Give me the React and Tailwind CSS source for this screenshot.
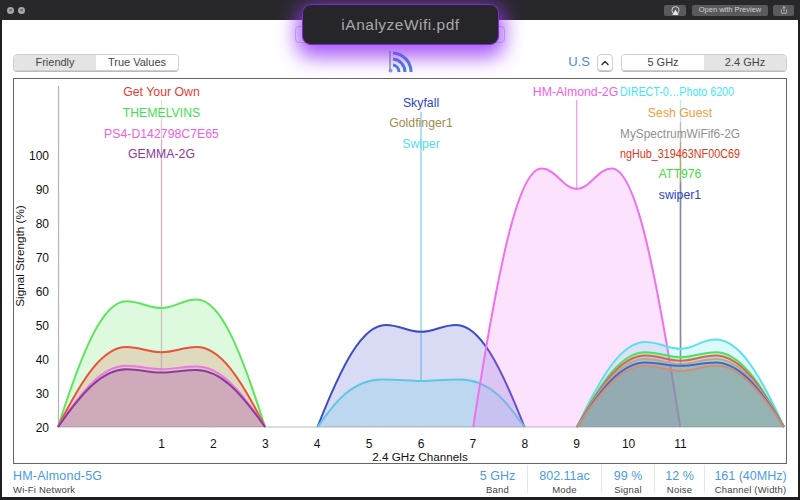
import { ChevronUp, Share } from 'lucide-react';

const BASE = 427;
const yOf = (v) => BASE - (v - 20) * 3.4;
const xOf = (c) => 161.5 + (c - 1) * 51.9;

function curvePath(ch, left, mid, right, soft) {
  const cx = xOf(ch);
  const h = 103.5;
  const x0 = cx - h;
  const x1 = cx + h;
  const pl = yOf(left);
  const pm = yOf(mid);
  const pr = yOf(right);
  const k = soft ? 0.35 : 0.62;
  const a = soft ? 0.12 : 0.24;
  const b = soft ? 0.3 : 0.435;
  const c = soft ? 0.62 : 0.66;
  const rise = (p) => BASE - (BASE - p) * k;
  return [
    `M${x0} ${BASE}`,
    `C${x0 + a * h} ${rise(pl)} ${x0 + b * h} ${pl} ${cx - (1 - c) * h} ${pl}`,
    `C${cx - 0.2 * h} ${pl} ${cx - 0.13 * h} ${pm} ${cx} ${pm}`,
    `C${cx + 0.13 * h} ${pm} ${cx + 0.2 * h} ${pr} ${cx + (1 - c) * h} ${pr}`,
    `C${x1 - b * h} ${pr} ${x1 - a * h} ${rise(pr)} ${x1} ${BASE}`,
  ].join(' ');
}

const curvas = [
  { ch: 1, v: [57, 55, 57.5], cor: '#5ce65c', topo: 100, linha: 0.22 },
  { ch: 1, v: [43.5, 42, 43.5], cor: '#e8533c', topo: 100, linha: 0.1 },
  { ch: 1, v: [38, 37, 37.8], cor: '#e77be0', topo: 120, linha: 0.2 },
  { ch: 1, v: [37, 36, 36.8], cor: '#8e3a9c', topo: 140, linha: 0.2 },
  { ch: 6, v: [50, 48, 50], cor: '#3c4cc4', topo: 112, linha: 0.08 },
  { ch: 6, v: [34, 33.5, 34], cor: '#5cc8e4', topo: 112, soft: true, linha: 0.7 },
  { ch: 9, v: [96, 90, 96], cor: '#f070f0', topo: 100, linha: 0.7 },
  { ch: 11, v: [45, 43, 45.7], cor: '#5ce0f0', topo: 100, linha: 0.45 },
  { ch: 11, v: [42, 40.5, 42], cor: '#50e060', topo: 162, linha: 0.45 },
  { ch: 11, v: [41, 39.5, 41], cor: '#d8645a', topo: 142, linha: 0.45 },
  { ch: 11, v: [40, 38.5, 40], cor: '#b8a890', topo: 122, linha: 0.45, fundo: '#80a8a0' },
  { ch: 11, v: [39, 38, 39], cor: '#4068d0', topo: 182, linha: 0.6 },
  { ch: 11, v: [38, 36.5, 38], cor: '#d09070', topo: 122, linha: 0.3, fundo: '#709a88' },
];

const rotulos = [
  { t: 'Get Your Own', x: 161.5, y: 91, cor: '#e0402f' },
  { t: 'THEMELVINS', x: 161.5, y: 112, cor: '#3fe04f' },
  { t: 'PS4-D142798C7E65', x: 161.5, y: 133, cor: '#f060e8' },
  { t: 'GEMMA-2G', x: 161.5, y: 153, cor: '#8e3a9c' },
  { t: 'Skyfall', x: 421, y: 102, cor: '#2a45c8' },
  { t: 'Goldfinger1', x: 421, y: 122, cor: '#a58a50' },
  { t: 'Swiper', x: 421, y: 143, cor: '#50e0f0' },
  { t: 'HM-Almond-2G', x: 575.5, y: 91, cor: '#f060f0' },
  { t: 'DIRECT-0…Photo 6200', x: 677, y: 91, cor: '#40e8f8', w: 114 },
  { t: 'Sesh Guest', x: 680, y: 112, cor: '#f0a040' },
  { t: 'MySpectrumWiFif6-2G', x: 680, y: 133, cor: '#909090', w: 120 },
  { t: 'ngHub_319463NF00C69', x: 680, y: 153, cor: '#e03820', w: 120 },
  { t: 'ATT976', x: 680, y: 173, cor: '#40e040' },
  { t: 'swiper1', x: 680, y: 194, cor: '#2a45c8' },
];

function Grafico() {
  return (
    <svg viewBox="14 79 772 384" className="block h-full w-full font-['Liberation_Sans',sans-serif]">
      <line x1="58.5" y1="86" x2="58.5" y2={BASE} stroke="#b4b4b4" strokeWidth="1.2" />
      <line x1="58" y1={BASE} x2="784" y2={BASE} stroke="#bcbcbc" strokeWidth="1.2" />

      {curvas.map((c, i) => (
        <line
          key={`l${i}`}
          x1={xOf(c.ch)}
          x2={xOf(c.ch)}
          y1={c.topo}
          y2={yOf(c.v[1])}
          stroke={c.cor}
          strokeOpacity={c.linha}
          strokeWidth="1.3"
        />
      ))}

      {curvas.map((c, i) => (
        <path
          key={`c${i}`}
          d={curvePath(c.ch, c.v[0], c.v[1], c.v[2], c.soft)}
          fill={c.fundo || c.cor}
          fillOpacity="0.2"
          stroke={c.cor}
          strokeWidth="2"
        />
      ))}

      {[100, 90, 80, 70, 60, 50, 40, 30, 20].map((v) => (
        <text key={v} x="49" y={yOf(v) + 4.5} textAnchor="end" fontSize="12" fill="#111">
          {v}
        </text>
      ))}

      {[1, 2, 3, 4, 5, 6, 7, 8, 9, 10, 11].map((c) => (
        <text key={c} x={xOf(c)} y="448" textAnchor="middle" fontSize="12" fill="#111">
          {c}
        </text>
      ))}

      <text x="420" y="461" textAnchor="middle" fontSize="11.7" fill="#111">
        2.4 GHz Channels
      </text>
      <text
        transform="translate(24 256) rotate(-90)"
        textAnchor="middle"
        fontSize="11.7"
        fill="#111"
      >
        Signal Strength (%)
      </text>

      {rotulos.map((r) => (
        <text
          key={r.t}
          x={r.x}
          y={r.y + 4.5}
          textAnchor="middle"
          fontSize="12.3"
          fill={r.cor}
          {...(r.w ? { textLength: r.w, lengthAdjust: 'spacingAndGlyphs' } : {})}
        >
          {r.t}
        </text>
      ))}
    </svg>
  );
}

function IconeWifi() {
  return (
    <svg width="26" height="24" viewBox="0 0 26 24" fill="none">
      <line x1="3" y1="1" x2="3" y2="19" stroke="#6b8a5a" strokeWidth="1.2" />
      <circle cx="3.5" cy="20.5" r="2" fill="#7fa0d8" />
      <path d="M6 15a7 7 0 0 1 6 7" stroke="#3f80de" strokeWidth="3" />
      <path d="M6 9a13 13 0 0 1 12 13" stroke="#3f80de" strokeWidth="3" />
      <path d="M6 3a19 19 0 0 1 18 19" stroke="#3f80de" strokeWidth="3" />
    </svg>
  );
}

function IconeAirplay() {
  return (
    <svg width="9" height="9" viewBox="0 0 9 9" fill="none">
      <circle cx="4.5" cy="4.2" r="3.6" stroke="#e0e0e0" strokeWidth="0.9" />
      <path d="M4.5 3.6 7.6 9H1.4Z" fill="#e8e8e8" />
    </svg>
  );
}

function Segmento({ esquerda, direita, ativo }) {
  const base = 'flex items-center justify-center text-[11px] text-[#444]';
  return (
    <div className="flex h-[17px] w-[166px] overflow-hidden rounded-[4px] border border-[#cfcfcf] shadow-[0_1px_0_#bbb]">
      <div className={`${base} w-1/2 ${ativo === 'esquerda' ? 'bg-[#e4e4e4]' : 'bg-white'}`}>{esquerda}</div>
      <div className={`${base} w-1/2 ${ativo === 'direita' ? 'bg-[#e4e4e4]' : 'bg-white'}`}>{direita}</div>
    </div>
  );
}

function BarraTitulo() {
  return (
    <div className="flex h-5 shrink-0 items-center bg-[#28282b] pl-[7px] pr-[6px]">
      <span className="flex h-[7px] w-[7px] items-center justify-center rounded-full bg-[#a8a8a8] text-[6px] leading-none text-[#333]">×</span>
      <span className="ml-1 flex h-[7px] w-[7px] items-center justify-center rounded-full bg-[#a8a8a8] text-[6px] leading-none text-[#333]">×</span>
      <div className="ml-auto flex h-[11px] w-[22px] items-center justify-center rounded-[2px] bg-[#5a5a5c]">
        <IconeAirplay />
      </div>
      <div className="ml-[6px] flex h-[11px] w-[76px] items-center justify-center rounded-[2px] bg-[#5a5a5c] text-[7.5px] text-[#d0d0d0]">
        Open with Preview
      </div>
      <div className="ml-[5px] flex h-[11px] w-[21px] items-center justify-center rounded-[2px] bg-[#5a5a5c]">
        <Share className="h-2 w-2 text-[#ddd]" />
      </div>
    </div>
  );
}

function Cabecalho() {
  return (
    <div className="grid h-[58px] shrink-0 grid-cols-[1fr_auto_1fr] px-[11px]">
      <div className="flex items-end pb-[7px]">
        <Segmento esquerda="Friendly" direita="True Values" ativo="esquerda" />
      </div>
      <div className="flex flex-col items-center pt-[6px]">
        <div className="h-[17px] w-[210px] rounded-[4px] border border-[#cfcfcf]" />
        <div className="mt-[7px]">
          <IconeWifi />
        </div>
      </div>
      <div className="flex items-end justify-end pb-[7px]">
        <span className="mb-[1px] mr-[7px] text-[13px] leading-4 text-[#4a8ad4]">U.S</span>
        <div className="mr-2 flex h-[17px] w-[16px] items-center justify-center rounded-[4px] border border-[#cfcfcf] shadow-[0_1px_0_#bbb]">
          <ChevronUp className="h-3 w-3 text-[#333]" strokeWidth={3} />
        </div>
        <Segmento esquerda="5 GHz" direita="2.4 GHz" ativo="direita" />
      </div>
    </div>
  );
}

function Info({ valor, label, largura, semBorda }) {
  return (
    <div className={`flex h-[28px] flex-col items-center whitespace-nowrap pt-[3px] ${semBorda ? '' : 'border-l border-[#e6e6e6]'} ${largura}`}>
      <span className="text-[12.5px] leading-[16px] text-[#4a9ce0]">{valor}</span>
      <span className="text-[9.5px] leading-[11px] tracking-[0.2px] text-[#444]">{label}</span>
    </div>
  );
}

function Rodape() {
  return (
    <div className="flex h-[33px] shrink-0 items-start px-[11px] pt-[1px]">
      <div className="flex flex-col pt-[3px]">
        <span className="text-[12.5px] leading-[16px] tracking-[0.2px] text-[#4a9ce0]">HM-Almond-5G</span>
        <span className="text-[9.5px] leading-[11px] tracking-[0.2px] text-[#444]">Wi-Fi Network</span>
      </div>
      <div className="ml-auto flex">
        <Info valor="5 GHz" label="Band" largura="w-[59px]" semBorda />
        <Info valor="802.11ac" label="Mode" largura="w-[74px]" />
        <Info valor="99 %" label="Signal" largura="w-[53px]" />
        <Info valor="12 %" label="Noise" largura="w-[50px]" />
        <Info valor="161 (40MHz)" label="Channel (Width)" largura="w-[83px] pl-[9px]" />
      </div>
    </div>
  );
}

export default function App() {
  return (
    <div className="relative flex h-[500px] w-[800px] flex-col overflow-hidden bg-[#1e1e20] font-['Liberation_Sans',sans-serif]">
      <BarraTitulo />
      <div className="mx-[2px] mb-[3px] flex min-h-0 flex-1 flex-col bg-white">
        <Cabecalho />
        <div className="mx-[11px] min-h-0 flex-1 border border-[#666]">
          <Grafico />
        </div>
        <Rodape />
      </div>

      <div className="absolute left-[302px] top-[4px] flex h-[41px] w-[197px] items-center justify-center rounded-[9px] border-[1.5px] border-[#7a2fc4] bg-[#25252a] text-[15.5px] tracking-[0.5px] text-[#a8a8a8] shadow-[0_7px_20px_5px_rgba(150,60,245,0.85)]">
        iAnalyzeWifi.pdf
      </div>
    </div>
  );
}
